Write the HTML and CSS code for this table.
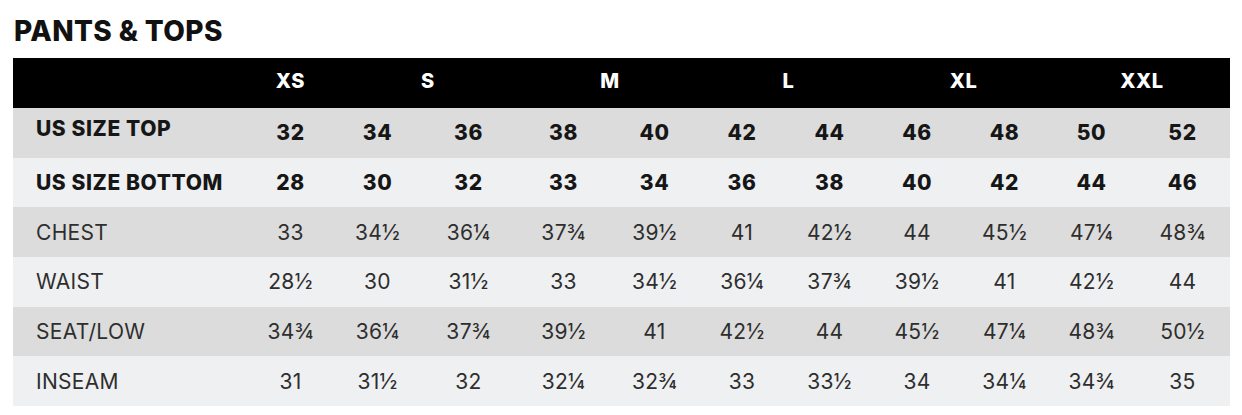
FILE: index.html
```html
<!DOCTYPE html>
<html lang="en">
<head>
<meta charset="utf-8">
<title>Pants &amp; Tops</title>
<link rel="stylesheet" href="styles.css">
</head>
<body>
<h1 class="title">PANTS &amp; TOPS</h1>
<div class="chart">
  <div class="row head">
    <div class="cell"></div>
    <div class="cell">XS</div>
    <div class="cell span2">S</div>
    <div class="cell span2">M</div>
    <div class="cell span2">L</div>
    <div class="cell span2">XL</div>
    <div class="cell span2">XXL</div>
  </div>
  <div class="row dark strong">
    <div class="cell label lift">US SIZE TOP</div>
    <div class="cell">32</div><div class="cell">34</div><div class="cell">36</div><div class="cell">38</div><div class="cell">40</div><div class="cell">42</div><div class="cell">44</div><div class="cell">46</div><div class="cell">48</div><div class="cell">50</div><div class="cell">52</div>
  </div>
  <div class="row light strong">
    <div class="cell label">US SIZE BOTTOM</div>
    <div class="cell">28</div><div class="cell">30</div><div class="cell">32</div><div class="cell">33</div><div class="cell">34</div><div class="cell">36</div><div class="cell">38</div><div class="cell">40</div><div class="cell">42</div><div class="cell">44</div><div class="cell">46</div>
  </div>
  <div class="row dark">
    <div class="cell label">CHEST</div>
    <div class="cell">33</div><div class="cell">34½</div><div class="cell">36¼</div><div class="cell">37¾</div><div class="cell">39½</div><div class="cell">41</div><div class="cell">42½</div><div class="cell">44</div><div class="cell">45½</div><div class="cell">47¼</div><div class="cell">48¾</div>
  </div>
  <div class="row light">
    <div class="cell label">WAIST</div>
    <div class="cell">28½</div><div class="cell">30</div><div class="cell">31½</div><div class="cell">33</div><div class="cell">34½</div><div class="cell">36¼</div><div class="cell">37¾</div><div class="cell">39½</div><div class="cell">41</div><div class="cell">42½</div><div class="cell">44</div>
  </div>
  <div class="row dark">
    <div class="cell label">SEAT/LOW</div>
    <div class="cell">34¾</div><div class="cell">36¼</div><div class="cell">37¾</div><div class="cell">39½</div><div class="cell">41</div><div class="cell">42½</div><div class="cell">44</div><div class="cell">45½</div><div class="cell">47¼</div><div class="cell">48¾</div><div class="cell">50½</div>
  </div>
  <div class="row light">
    <div class="cell label">INSEAM</div>
    <div class="cell">31</div><div class="cell">31½</div><div class="cell">32</div><div class="cell">32¼</div><div class="cell">32¾</div><div class="cell">33</div><div class="cell">33½</div><div class="cell">34</div><div class="cell">34¼</div><div class="cell">34¾</div><div class="cell">35</div>
  </div>
</div>
</body>
</html>
```

FILE: styles.css
```css
html, body {
  margin: 0;
  padding: 0;
  background: #ffffff;
}

body {
  font-family: "Inter", "Liberation Sans", sans-serif;
  color: #2a2a2a;
}

.title {
  margin: 0;
  padding: 14px 0 0 14px;
  height: 58px;
  box-sizing: border-box;
  font-size: 28px;
  line-height: 34px;
  font-weight: 800;
  color: #111111;
  letter-spacing: 0.4px;
}

.chart {
  margin-left: 13px;
  width: 1217px;
}

.row {
  display: grid;
  grid-template-columns: 234px 87px 87px 95px 95px 87px 88px 87px 88px 87px 87px 1fr;
  height: 49.7px;
  align-items: center;
  font-size: 21px;
  color: #2e2e2e;
  letter-spacing: 0.3px;
}

.cell {
  text-align: center;
}

.cell.label {
  text-align: left;
  padding-left: 23px;
}

.head {
  height: 50px;
  background: #000000;
  color: #ffffff;
  font-weight: 800;
  font-size: 20px;
  letter-spacing: 0.6px;
  padding-bottom: 4px;
  box-sizing: border-box;
}

.head .span2 {
  grid-column: span 2;
  padding-left: 6px;
}

.dark {
  background: #dcdcdc;
}

.light {
  background: #eef0f2;
}

.strong {
  font-weight: 800;
  color: #161616;
  letter-spacing: 0.6px;
}

.lift {
  padding-bottom: 8px;
}
```
